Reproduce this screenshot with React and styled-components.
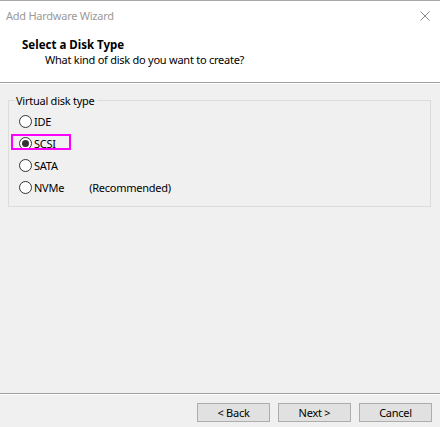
import React from 'react';
import styled, { createGlobalStyle } from 'styled-components';

const GlobalStyle = createGlobalStyle`
	html, body {
		margin: 0;
		padding: 0;
		background: #f0f0f0;
	}
	body {
		font-family: 'Noto Sans', 'Liberation Sans', sans-serif;
		font-size: 11px;
		letter-spacing: -0.25px;
		color: #000;
	}
`;

const Window = styled.div`
	display: flex;
	flex-direction: column;
	width: 440px;
	height: 427px;
	box-sizing: border-box;
	border-top: 1px solid #a8a8a8;
	background: #f0f0f0;
`;

const TitleBar = styled.div`
	display: flex;
	align-items: center;
	justify-content: space-between;
	height: 29px;
	padding: 0 10px 0 6px;
	background: #fff;
	color: #9a9a9a;
	font-size: 11px;
	line-height: 15px;
`;

const Header = styled.div`
	display: flex;
	flex-direction: column;
	height: 52px;
	box-sizing: border-box;
	padding: 7px 0 0 22px;
	background: #fff;
	line-height: 15px;
`;

const HeaderTitle = styled.div`
	font-weight: bold;
	font-size: 11.5px;
	letter-spacing: 0;
`;

const HeaderSub = styled.div`
	padding-left: 23px;
	color: #000;
`;

const Divider = styled.div`
	height: 1px;
	background: #a0a0a0;
	border-bottom: 1px solid #fff;
`;

const Body = styled.div`
	flex: 1;
	padding: 16px 9px 0 8px;
`;

const GroupBox = styled.div`
	display: flex;
	flex-direction: column;
	padding: 0 10px 8px 10px;
	border: 1px solid #dcdcdc;
	line-height: 15px;
`;

const Legend = styled.span`
	align-self: flex-start;
	margin: -8px 0 0 -4px;
	padding: 0 2px 0 1px;
	background: #f0f0f0;
`;

const Options = styled.div`
	display: flex;
	flex-direction: column;
	padding-top: 2px;
`;

const Option = styled.label`
	position: relative;
	display: flex;
	align-items: center;
	height: 22px;
	gap: 2px;
`;

const Circle = styled.span`
	display: flex;
	align-items: center;
	justify-content: center;
	width: 11px;
	height: 11px;
	border: 1px solid #333;
	border-radius: 50%;
	background: #fff;

	&::after {
		content: '';
		display: ${(p) => (p.$checked ? 'block' : 'none')};
		width: 7px;
		height: 7px;
		border-radius: 50%;
		background: #333;
	}
`;

const Note = styled.span`
	margin-left: 23px;
`;

const Highlight = styled.span`
	position: absolute;
	left: -8px;
	top: 2px;
	width: 56px;
	height: 12px;
	border: 2px solid #ff00ff;
	pointer-events: none;
`;

const Footer = styled.div`
	display: flex;
	justify-content: flex-end;
	gap: 8px;
	padding: 8px 8px 5px 0;
`;

const Button = styled.button`
	width: 73px;
	height: 19px;
	padding: 0;
	font-family: inherit;
	font-size: 11px;
	letter-spacing: inherit;
	line-height: 15px;
	color: #000;
	background: #e1e1e1;
	border: 1px solid #adadad;
`;

const options = [
	{ name: 'IDE' },
	{ name: 'SCSI', checked: true },
	{ name: 'SATA' },
	{ name: 'NVMe', note: '(Recommended)' },
];

const App = () => (
	<>
		<GlobalStyle />
		<Window>
			<TitleBar>
				<span>Add Hardware Wizard</span>
				<svg width="10" height="10" viewBox="0 0 10 10">
					<path d="M0.5 0.5 L9.5 9.5 M9.5 0.5 L0.5 9.5" stroke="#8a8a8a" strokeWidth="1" />
				</svg>
			</TitleBar>
			<Header>
				<HeaderTitle>Select a Disk Type</HeaderTitle>
				<HeaderSub>What kind of disk do you want to create?</HeaderSub>
			</Header>
			<Divider />
			<Body>
				<GroupBox>
					<Legend>Virtual disk type</Legend>
					<Options>
						{options.map((o) => (
							<Option key={o.name}>
								<Circle $checked={o.checked} />
								{o.name}
								{o.note && <Note>{o.note}</Note>}
								{o.checked && <Highlight />}
							</Option>
						))}
					</Options>
				</GroupBox>
			</Body>
			<Divider />
			<Footer>
				<Button>&lt; Back</Button>
				<Button>Next &gt;</Button>
				<Button>Cancel</Button>
			</Footer>
		</Window>
	</>
);

export default App;
